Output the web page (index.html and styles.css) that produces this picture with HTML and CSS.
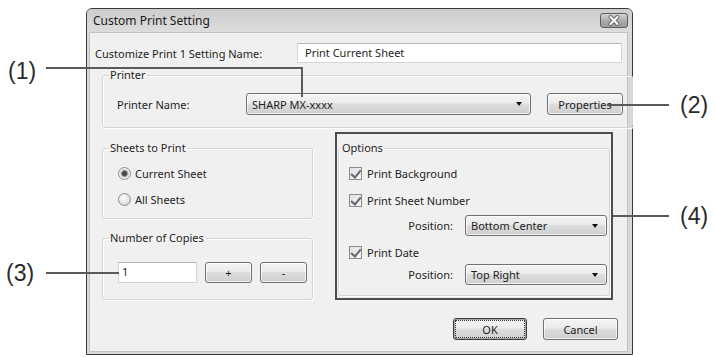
FILE: index.html
```html
<!DOCTYPE html>
<html lang="en">
<head>
    <meta charset="UTF-8">
    <title>Custom Print Setting</title>
    <link rel="stylesheet" href="styles.css">
</head>
<body>
    <div class="sheet">
        <div class="dialog">
            <div class="titlebar">
                <span class="title">Custom Print Setting</span>
                <button class="close-btn" aria-label="Close">
                    <svg width="28" height="15" viewBox="0 0 28 15">
                        <path d="M10.5 4 L17.5 11 M17.5 4 L10.5 11" stroke="#6a6a6a" stroke-width="4" stroke-linecap="round"/>
                        <path d="M10.5 4 L17.5 11 M17.5 4 L10.5 11" stroke="#ffffff" stroke-width="2" stroke-linecap="round"/>
                    </svg>
                </button>
            </div>
            <div class="frame">
                <div class="client">
                    <div class="name-row">
                        <span>Customize Print 1 Setting Name:</span>
                        <div class="textbox">Print Current Sheet</div>
                    </div>

                    <fieldset class="group printer-group">
                        <legend>Printer</legend>
                        <div class="printer-row">
                            <span>Printer Name:</span>
                            <div class="combo">SHARP MX-xxxx<span class="arrow"></span></div>
                            <button class="btn">Properties</button>
                        </div>
                    </fieldset>

                    <div class="columns">
                        <div class="left-col">
                            <fieldset class="group sheets-group">
                                <legend>Sheets to Print</legend>
                                <div class="option"><span class="radio checked"></span>Current Sheet</div>
                                <div class="option"><span class="radio"></span>All Sheets</div>
                            </fieldset>
                            <fieldset class="group copies-group">
                                <legend>Number of Copies</legend>
                                <div class="copies-row">
                                    <div class="textbox">1</div>
                                    <button class="btn">+</button>
                                    <button class="btn">-</button>
                                </div>
                            </fieldset>
                        </div>

                        <div class="highlight">
                            <fieldset class="group options-group">
                                <legend>Options</legend>
                                <div class="option first"><span class="checkbox"></span>Print Background</div>
                                <div class="option"><span class="checkbox"></span>Print Sheet Number</div>
                                <div class="position-row">
                                    <span>Position:</span>
                                    <div class="combo">Bottom Center<span class="arrow"></span></div>
                                </div>
                                <div class="option"><span class="checkbox"></span>Print Date</div>
                                <div class="position-row tight">
                                    <span>Position:</span>
                                    <div class="combo">Top Right<span class="arrow"></span></div>
                                </div>
                            </fieldset>
                        </div>
                    </div>

                    <div class="footer">
                        <button class="btn default"><span class="focus">OK</span></button>
                        <button class="btn">Cancel</button>
                    </div>
                </div>
            </div>
        </div>
    </div>

    <!-- callout leaders -->
    <svg class="leaders" width="715" height="357" viewBox="0 0 715 357">
        <polyline points="46,68 302,68 302,97" fill="none" stroke="#5a5a5a" stroke-width="2"/>
        <line x1="607" y1="105" x2="669" y2="105" stroke="#5a5a5a" stroke-width="2"/>
        <line x1="46" y1="273" x2="119" y2="273" stroke="#5a5a5a" stroke-width="2"/>
        <line x1="613" y1="216" x2="669" y2="216" stroke="#5a5a5a" stroke-width="2"/>
    </svg>
    <span class="callout c1">(1)</span>
    <span class="callout c2">(2)</span>
    <span class="callout c3">(3)</span>
    <span class="callout c4">(4)</span>
</body>
</html>
```

FILE: styles.css
```css
* {
    margin: 0;
    padding: 0;
    box-sizing: border-box;
}

:root {
    --text: #1e1e1e;
    --face: #f0f0f0;
    --group-line: #d5d5d5;
    --btn-border: #707070;
}

body {
    position: relative;
    width: 715px;
    height: 357px;
    overflow: hidden;
    background: #ffffff;
    font-family: "Noto Sans", "Open Sans", sans-serif;
    font-size: 11px;
    color: var(--text);
}

/* Dialog window */
.sheet {
    padding: 8px 0 0 86px;
}

.dialog {
    width: 547px;
    height: 347px;
    display: flex;
    flex-direction: column;
    border: 1px solid #3a3a3a;
    border-radius: 6px 6px 0 0;
    background: #d9d9d9;
}

.titlebar {
    height: 23px;
    display: flex;
    align-items: center;
    justify-content: space-between;
    padding: 0 4px 0 6px;
    border-radius: 5px 5px 0 0;
    background: linear-gradient(#cdcdcd, #dcdcdc);
}

.title {
    font-size: 12px;
    color: #1a1a1a;
}

.close-btn {
    width: 28px;
    height: 15px;
    display: flex;
    border: 1px solid #5e5e5e;
    border-radius: 3px;
    background: linear-gradient(#d4d4d4, #a9a9a9 55%, #9a9a9a);
}

.close-btn svg {
    margin: -1px;
}

.frame {
    flex: 1;
    padding: 0 4px 2px 2px;
}

.client {
    height: 100%;
    padding: 10px 5px 0 5px;
    border: 1px solid #c2c2c2;
    background: var(--face);
}

/* Controls */
.textbox {
    height: 20px;
    padding-left: 7px;
    line-height: 18px;
    background: #ffffff;
    border: 1px solid #d4d5d8;
    border-top-color: #b5b7bb;
}

.btn {
    font: inherit;
    color: var(--text);
    border: 1px solid var(--btn-border);
    border-radius: 3px;
    background: linear-gradient(#f4f4f4, #ebebeb 45%, #dddddd 50%, #cfcfcf);
    box-shadow: inset 0 0 0 1px rgba(255, 255, 255, 0.7);
}

.combo {
    display: flex;
    align-items: center;
    padding-left: 5px;
    border: 1px solid var(--btn-border);
    border-radius: 3px;
    background: linear-gradient(#f4f4f4, #ebebeb 45%, #dddddd 50%, #cfcfcf);
    box-shadow: inset 0 0 0 1px rgba(255, 255, 255, 0.7);
}

.combo .arrow {
    margin-left: auto;
    margin-right: 8px;
    border-left: 3.5px solid transparent;
    border-right: 3.5px solid transparent;
    border-top: 4px solid #111111;
}

.group {
    border: 1px solid var(--group-line);
    border-radius: 3px;
    box-shadow: inset 1px 1px 0 #ffffff, 1px 1px 0 #ffffff;
}

.group legend {
    padding: 0 1px;
    line-height: 16px;
    color: var(--text);
}

/* Name row */
.name-row {
    display: grid;
    grid-template-columns: 202px 1fr;
    align-items: center;
}

/* Printer group */
.printer-group {
    margin: 4px 5px 0 7px;
    padding: 10px 9px 12px 6px;
}

.printer-row {
    display: grid;
    grid-template-columns: 113px 285px 76px;
    column-gap: 16px;
    height: 22px;
    margin-left: 8px;
    align-items: center;
}

.printer-row .combo,
.printer-row .btn {
    height: 22px;
}

/* Two columns */
.columns {
    display: grid;
    grid-template-columns: 211px 278px;
    column-gap: 22px;
    align-items: start;
    margin: 4px 0 0 7px;
}

.sheets-group {
    margin-top: 8px;
    padding: 8px 6px 10px 6px;
}

.option {
    display: flex;
    align-items: center;
    gap: 4px;
    height: 18px;
}

.sheets-group .option {
    margin-left: 9px;
}

.sheets-group .option + .option {
    margin-top: 8px;
}

.radio {
    width: 13px;
    height: 13px;
    border-radius: 50%;
    border: 1px solid #8c8c8c;
    background: radial-gradient(circle at 40% 35%, #ffffff, #dcdcdc 70%, #cfcfcf);
}

.radio.checked {
    background: radial-gradient(circle, #3a3a3a 0, #5c5c5c 2.5px, #c8c8c8 3.5px, #f4f4f4 5px, #d8d8d8);
}

.copies-group {
    margin-top: 11px;
    padding: 16px 5px 16px 6px;
}

.copies-row {
    display: grid;
    grid-template-columns: 79px 47px 47px;
    column-gap: 8px;
    margin-left: 9px;
    height: 21px;
}

.copies-row .textbox {
    height: 21px;
    padding-left: 3px;
}

/* Highlighted options block */
.highlight {
    height: 168px;
    padding: 6px 1px 2px 1px;
    border: 2px solid #4d4d4d;
}

.options-group {
    height: 100%;
    padding: 8px 2px 0 2px;
}

.options-group .option {
    margin-left: 8px;
    gap: 5px;
}

.options-group .option + .option {
    margin-top: 9px;
}

.checkbox {
    width: 13px;
    height: 13px;
    border: 1px solid #8c8c8c;
    background: linear-gradient(135deg, #dedede, #f8f8f8);
    position: relative;
}

.checkbox::after {
    content: "";
    position: absolute;
    left: 3px;
    top: 0;
    width: 4px;
    height: 8px;
    border-right: 2px solid #666666;
    border-bottom: 2px solid #666666;
    transform: rotate(40deg);
}

.position-row {
    display: flex;
    justify-content: flex-end;
    align-items: center;
    gap: 12px;
    margin-top: 6px;
    margin-bottom: 7px;
}

.position-row.tight {
    margin-top: 3px;
    margin-bottom: 0;
}

.position-row .combo {
    width: 142px;
    height: 21px;
}

/* Footer buttons */
.footer {
    display: flex;
    justify-content: flex-end;
    gap: 16px;
    margin: 18px 4px 0 0;
}

.footer .btn {
    width: 75px;
    height: 22px;
}

.footer .btn.default {
    width: 74px;
    padding: 2px;
    border-color: #3c3c3c;
    box-shadow: inset 0 0 0 1px #a8a8a8;
}

.focus {
    display: flex;
    align-items: center;
    justify-content: center;
    height: 100%;
    outline: 1px dotted #333333;
}

/* Callouts */
.leaders {
    position: absolute;
    left: 0;
    top: 0;
}

.callout {
    position: absolute;
    font-family: "Liberation Sans", Arial, sans-serif;
    font-size: 23px;
    line-height: 1;
    color: #2a2a2a;
}

.c1 { left: 8px; top: 60px; }
.c2 { left: 680px; top: 94px; }
.c3 { left: 6px; top: 262px; }
.c4 { left: 680px; top: 205px; }
```
